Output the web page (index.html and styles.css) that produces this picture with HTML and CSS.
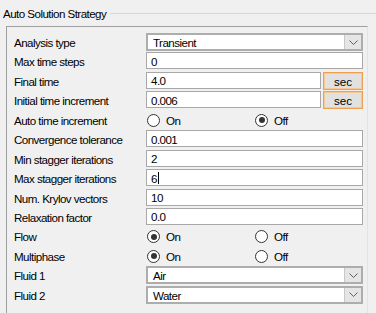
FILE: index.html
```html
<!DOCTYPE html>
<html lang="en">
<head>
    <meta charset="UTF-8">
    <title>Auto Solution Strategy</title>
    <link rel="stylesheet" href="styles.css">
</head>
<body>
    <div class="group-head">
        <span class="group-title">Auto Solution Strategy</span>
        <span class="group-line"></span>
    </div>
    <div class="panel">
        <div class="grid">
            <label>Analysis type</label>
            <div class="combo"><span class="combo-text">Transient</span><span class="combo-btn"><svg width="9" height="5" viewBox="0 0 9 5"><path d="M0.5 0.5 L4.5 4.5 L8.5 0.5" fill="none" stroke="#606060" stroke-width="1"/></svg></span></div>

            <label>Max time steps</label>
            <div class="input">0</div>

            <label>Final time</label>
            <div class="unit-row"><div class="input">4.0</div><button class="unit">sec</button></div>

            <label>Initial time increment</label>
            <div class="unit-row"><div class="input">0.006</div><button class="unit">sec</button></div>

            <label>Auto time increment</label>
            <div class="radios">
                <span class="radio"><span class="dot"></span>On</span>
                <span class="radio"><span class="dot checked"></span>Off</span>
            </div>

            <label>Convergence tolerance</label>
            <div class="input">0.001</div>

            <label>Min stagger iterations</label>
            <div class="input">2</div>

            <label>Max stagger iterations</label>
            <div class="input">6<span class="caret"></span></div>

            <label>Num. Krylov vectors</label>
            <div class="input">10</div>

            <label>Relaxation factor</label>
            <div class="input">0.0</div>

            <label>Flow</label>
            <div class="radios">
                <span class="radio"><span class="dot checked"></span>On</span>
                <span class="radio"><span class="dot"></span>Off</span>
            </div>

            <label>Multiphase</label>
            <div class="radios">
                <span class="radio"><span class="dot checked"></span>On</span>
                <span class="radio"><span class="dot"></span>Off</span>
            </div>

            <label>Fluid 1</label>
            <div class="combo"><span class="combo-text">Air</span><span class="combo-btn"><svg width="9" height="5" viewBox="0 0 9 5"><path d="M0.5 0.5 L4.5 4.5 L8.5 0.5" fill="none" stroke="#606060" stroke-width="1"/></svg></span></div>

            <label>Fluid 2</label>
            <div class="combo"><span class="combo-text">Water</span><span class="combo-btn"><svg width="9" height="5" viewBox="0 0 9 5"><path d="M0.5 0.5 L4.5 4.5 L8.5 0.5" fill="none" stroke="#606060" stroke-width="1"/></svg></span></div>
        </div>
    </div>
</body>
</html>
```

FILE: styles.css
```css
body { margin: 0; background: #f0f0f0; font-family: "Liberation Sans", Arial, sans-serif; font-size: 11.6px; color: #000; letter-spacing: -0.55px; overflow: hidden; }
.group-head { display: flex; align-items: center; height: 26px; padding-left: 3px; }
.group-title { white-space: nowrap; margin-top: 0; }
.group-line { flex: 1; height: 1px; background: #d8d8d8; margin-left: 4px; }
.panel { margin-left: 6px; width: 362px; height: 287px; border-left: 1px solid #a0a0a0; border-top: 1px solid #a0a0a0; border-right: 1px solid #e3e3e3; box-sizing: border-box; padding: 6px 6px 0 7px; }
.grid { display: grid; grid-template-columns: 132px 1fr; grid-auto-rows: 19.44px; align-items: start; }
.grid label { height: 17px; line-height: 19px; white-space: nowrap; }
.input { height: 17px; box-sizing: border-box; border: 1px solid #a8a8a8; background: #fff; padding-left: 4px; padding-top: 1px; display: flex; align-items: center; }
.caret { display: inline-block; width: 1px; height: 12px; background: #000; margin-left: 1px; }
.combo { height: 18px; box-sizing: border-box; border: 2px solid #adadad; background: #fff; display: flex; align-items: center; }
.combo-text { flex: 1; padding-left: 5px; padding-top: 1px; }
.combo-btn { width: 16px; height: 14px; background: #e5e5e5; display: flex; align-items: center; justify-content: center; border-left: 1px solid #c8c8c8; }
.unit-row { display: flex; gap: 2px; }
.unit-row .input { flex: 1; }
.unit { width: 40px; height: 18px; box-sizing: border-box; border: 1px solid #f0a04c; box-shadow: inset 0 0 0 1px #f8c892; background: #e1e1e1; font: inherit; padding: 1px 0 0; color: #000; }
.radios { display: flex; height: 17px; align-items: center; padding-left: 1px; margin-top: 1px; }
.radio { display: flex; align-items: center; width: 108px; gap: 6px; }
.dot { width: 13px; height: 13px; box-sizing: border-box; border: 1px solid #333; border-radius: 50%; background: #fff; display: flex; align-items: center; justify-content: center; }
.dot.checked::after { content: ""; width: 6px; height: 6px; border-radius: 50%; background: #333; }
```
